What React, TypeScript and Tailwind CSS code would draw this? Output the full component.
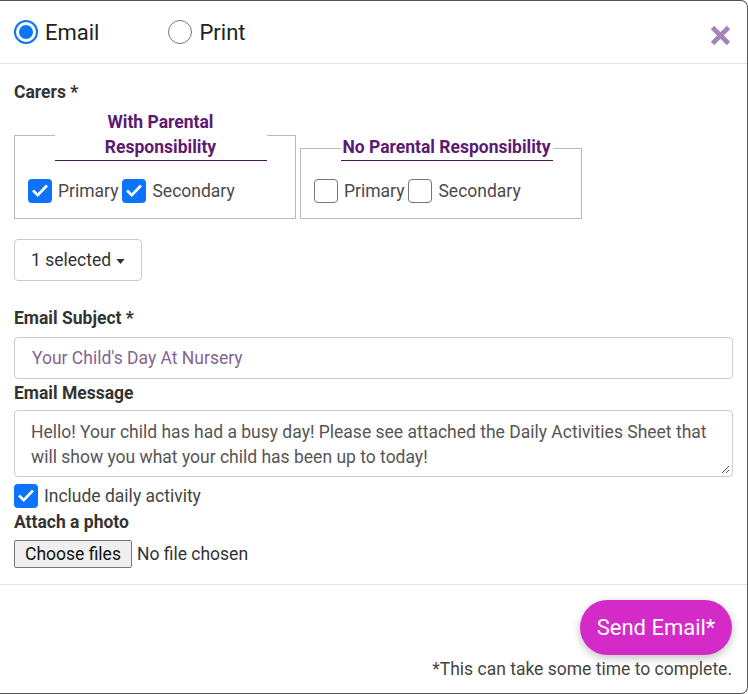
import React from "react";

const Check = ({ checked }: { checked: boolean }) =>
  checked ? (
    <span className="flex h-6 w-6 shrink-0 items-center justify-center rounded-[4px] bg-[#0b74fb]">
      <svg viewBox="0 0 24 24" className="h-[18px] w-[18px]">
        <path d="M4 12.5l5 5L20 6" fill="none" stroke="#fff" strokeWidth="3.6" strokeLinecap="square" />
      </svg>
    </span>
  ) : (
    <span className="h-6 w-6 shrink-0 rounded-[4px] border-[1.5px] border-[#767676] bg-white" />
  );

const Radio = ({ checked }: { checked: boolean }) =>
  checked ? (
    <span className="flex h-6 w-6 items-center justify-center rounded-full border-2 border-[#0b74fb] bg-white">
      <span className="h-[14px] w-[14px] rounded-full bg-[#0b74fb]" />
    </span>
  ) : (
    <span className="h-6 w-6 rounded-full border-[1.5px] border-[#767676] bg-white" />
  );

const Group = ({ title, checks }: { title: string; checks: boolean[] }) => (
  <fieldset className="w-[282px] rounded-none border border-[#bbb] pb-[15px] pl-[13px] pr-[2px]">
    <legend className="mx-auto w-[212px] border-b border-[#4b145f] text-center text-[17.5px] font-bold leading-[25px] text-[#5c1a72]">
      {title}
    </legend>
    <div className="mt-[18px] flex items-center text-[17.5px] leading-6 text-[#4a4a4a]">
      <Check checked={checks[0]} />
      <span className="ml-[6px] mr-[4px]">Primary</span>
      <Check checked={checks[1]} />
      <span className="ml-[6px]">Secondary</span>
    </div>
  </fieldset>
);

export default function App() {
  return (
    <div
      className="h-[694px] w-[748px] overflow-hidden rounded-r-[7px] border-y border-r border-[#555] bg-white text-[#333]"
      style={{ fontFamily: "Roboto, 'Liberation Sans', sans-serif" }}
    >
      {/* header */}
      <div className="flex h-[63px] items-center border-b border-[#e3e3e3] pl-[14px] pr-[16px]">
        <label className="flex items-center gap-[7px] text-[22px] text-[#222]">
          <Radio checked />
          Email
        </label>
        <label className="ml-[69px] flex items-center gap-[7px] text-[22px] text-[#222]">
          <Radio checked={false} />
          Print
        </label>
        <svg viewBox="0 0 21 21" className="ml-auto mt-[7px] h-[21px] w-[21px]">
          <path d="M2.5 2.5l16 16M18.5 2.5l-16 16" stroke="#a584b9" strokeWidth="4.6" />
        </svg>
      </div>

      {/* body */}
      <div className="px-[14px] pt-4">
        <div className="text-[17.5px] font-bold leading-6">Carers *</div>
        <div className="mt-[6px] flex items-end gap-1">
          <Group title="With Parental Responsibility" checks={[true, true]} />
          <Group title="No Parental Responsibility" checks={[false, false]} />
        </div>

        <button className="mt-5 flex h-[42px] items-center rounded-[4px] border border-[#ccc] bg-white pl-4 pr-[16px] text-[17.5px] text-[#333]">
          1 selected
          <svg viewBox="0 0 10 6" className="ml-[5px] mt-[2px] h-[5px] w-[9px]">
            <path d="M0 0h10L5 6z" fill="#333" />
          </svg>
        </button>

        <div className="mt-[25px] text-[17.5px] font-bold leading-6">Email Subject *</div>
        <div className="mt-[7px] flex h-[42px] items-center rounded-[4px] border border-[#ccc] pl-[17px] text-[17.5px] text-[#85658f]">
          Your Child's Day At Nursery
        </div>

        <div className="mt-[2px] text-[17.5px] font-bold leading-6">Email Message</div>
        <div className="relative mt-[5px] h-[67px] rounded-[4px] border border-[#ccc] pl-4 pr-4 pt-[9px] text-[17.5px] leading-[25px] text-[#555]">
          Hello! Your child has had a busy day! Please see attached the Daily Activities Sheet that will show you what your child has been up to today!
          <svg viewBox="0 0 10 10" className="absolute bottom-[2px] right-[2px] h-[10px] w-[10px]">
            <path d="M9 2L2 9M9 6L6 9" stroke="#555" strokeWidth="1" />
          </svg>
        </div>

        <label className="mt-[7px] flex items-center gap-[6px] text-[17.5px] leading-6 text-[#444]">
          <Check checked />
          Include daily activity
        </label>
        <div className="mt-[2px] text-[17.5px] font-bold leading-6">Attach a photo</div>
        <div className="mt-[6px] flex items-center text-[17.5px] text-[#333]">
          <span className="flex h-[28px] items-center rounded-[2px] border border-[#767676] bg-[#efefef] px-[10px] text-[#111]">
            Choose files
          </span>
          <span className="ml-[5px]">No file chosen</span>
        </div>
      </div>

      {/* footer */}
      <div className="mt-4 border-t border-[#e3e3e3] px-[15px] pt-[15px] text-right">
        <button className="h-[55px] w-[152px] rounded-full bg-[#d42ac8] text-[22px] text-white shadow-[0_3px_8px_rgba(0,0,0,0.25)]">
          Send Email*
        </button>
        <div className="mt-[2px] text-[17.5px] leading-6 text-[#444]">*This can take some time to complete.</div>
      </div>
    </div>
  );
}
